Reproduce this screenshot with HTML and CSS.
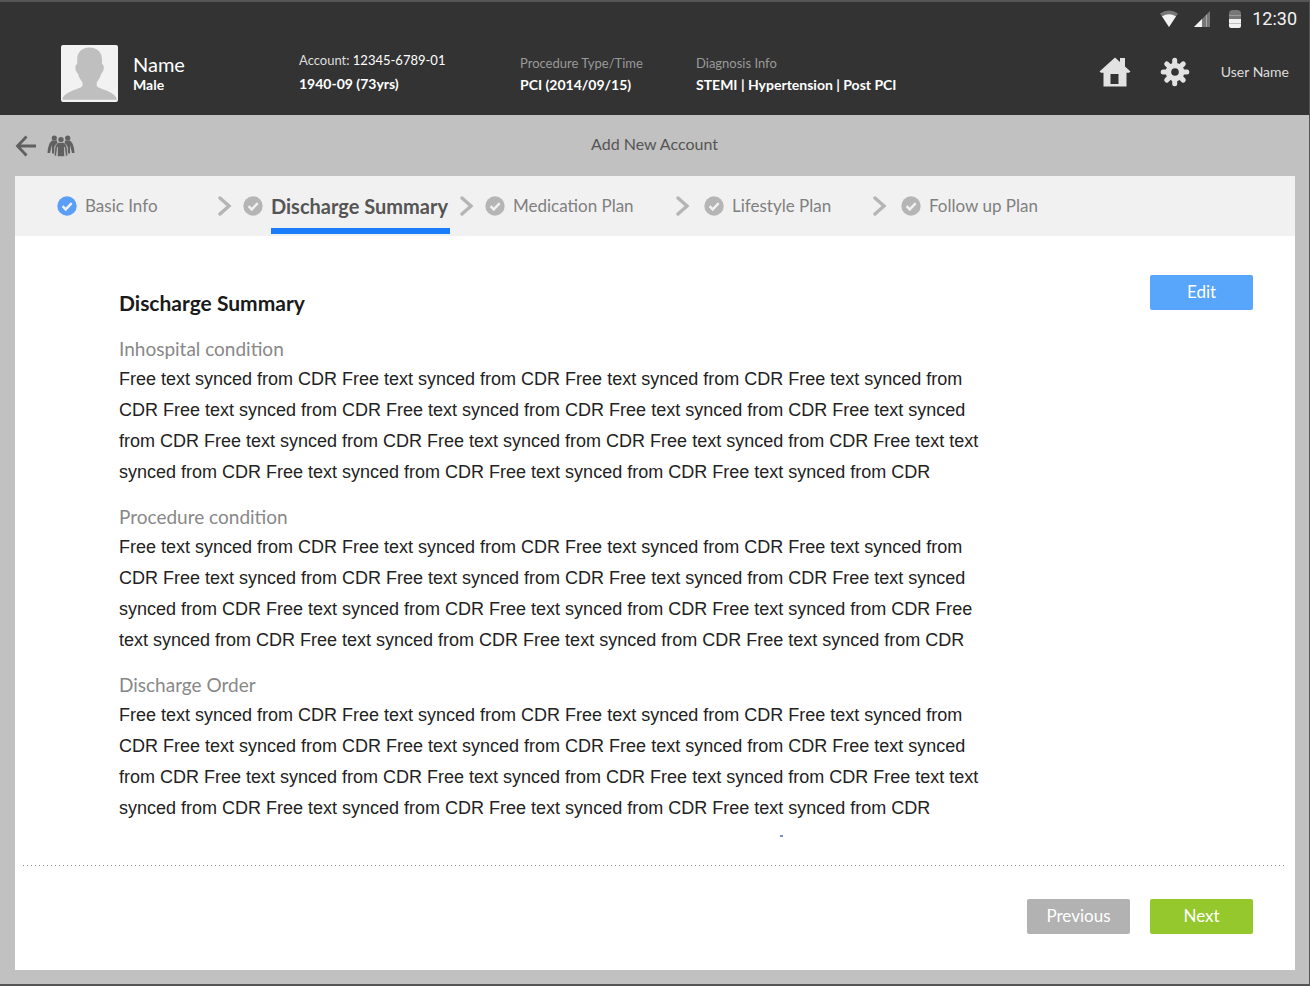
FILE: index.html
```html
<!DOCTYPE html>
<html lang="en">
<head>
<meta charset="utf-8">
<title>Discharge Summary</title>
<meta name="viewport" content="width=device-width, initial-scale=1">
<link rel="stylesheet" href="styles.css">
</head>
<body>
<svg width="0" height="0" class="defs" aria-hidden="true">
  <symbol id="check" viewBox="0 0 20 20"><circle cx="10" cy="10" r="9.7" fill="currentColor"/><path d="M5.6 10.2l3.1 3.2 6-6.3" fill="none" stroke="#f1f1f1" stroke-width="2.4"/></symbol>
  <symbol id="chevron" viewBox="0 0 14 20"><path d="M2 2l9 8-9 8" fill="none" stroke="currentColor" stroke-width="3.4" stroke-linecap="round"/></symbol>
</svg>
<div class="app">
  <header class="header">
    <div class="status">
      <svg width="20" height="18" viewBox="0 0 20 18" aria-hidden="true"><path d="M1 3.6Q10-2.4 19 3.6L10 17z" fill="#777"/><path d="M3 6.2Q10 2.2 17 6.2L10 17z" fill="#f2f2f2"/></svg>
      <svg width="18" height="18" viewBox="0 0 18 18" aria-hidden="true"><path d="M17 1v16H1z" fill="#777"/><path d="M9 9v8H1z" fill="#f2f2f2"/><path d="M13.5 5v12" stroke="#aaa"/></svg>
      <svg width="12" height="18" viewBox="0 0 12 18" aria-hidden="true"><path d="M0 4q0-4 4-4h4q4 0 4 4v5H0z" fill="#777"/><path d="M0 9h12v7q0 2-2 2H2q-2 0-2-2z" fill="#f2f2f2"/><path d="M0 5.500h12M0 13.500h12" stroke="#aaa" stroke-width=".7"/></svg>
      <time class="clock">12:30</time>
    </div>
    <div class="patient">
      <svg class="avatar" viewBox="0 0 57 57" role="img" aria-label="Patient photo"><rect width="57" height="57" rx="2" fill="#f2f2f2"/><path d="M28.500 2.600c8 0 12.600 5 12.500 12.400v4c2.500.5 2.500 7-.7 9.500-1 4-2.800 6-4.600 9v3.500c4 4 18 5 20 13v.8H1.500V54c2-8 16-9 20-13v-3.500c-1.800-3-3.600-5-4.600-9-3.200-2.500-3.200-9-.7-9.500v-4C16 7.600 20.500 2.600 28.500 2.600z" fill="#c0bfc0"/></svg>
      <div class="who"><span class="name">Name</span><strong>Male</strong></div>
      <div class="fact account"><span>Account: <b>12345-6789-01</b></span><strong>1940-09 (73yrs)</strong></div>
      <div class="fact procedure"><span>Procedure Type/Time</span><strong>PCI (2014/09/15)</strong></div>
      <div class="fact diagnosis"><span>Diagnosis Info</span><strong>STEMI | Hypertension | Post PCI</strong></div>
      <nav class="tools">
        <button type="button" class="icon" aria-label="Home"><svg width="32" height="30" viewBox="0 0 32 30"><path fill-rule="evenodd" d="M16 .5l5 4.600V1h5v8.500l5.500 5-1.500 1.300h-2.500V29.500h-23V15.800H2L.5 14.500zM11.500 17v10h8V17z" fill="#e2e2e2"/></svg></button>
        <button type="button" class="icon" aria-label="Settings"><svg width="30" height="30" viewBox="0 0 30 30"><g stroke="#e2e2e2" stroke-width="5" stroke-linecap="round"><path d="M14.700 3.200v23.600M3.200 15h23.600M6.700 6.900l16.600 16.200M23.300 6.900L6.700 23.100"/></g><circle cx="15" cy="15" r="9.300" fill="#e2e2e2"/><circle cx="15" cy="15" r="3.800" fill="#333"/></svg></button>
        <a href="#user" class="user">User Name</a>
      </nav>
    </div>
  </header>
  <div class="titlebar">
    <div class="left">
      <button type="button" class="icon" aria-label="Back"><svg width="22" height="22" viewBox="0 0 22 22"><path d="M11.500 1.500L2.500 11l9 9.500M2.500 11H21" fill="none" stroke="#606060" stroke-width="2.800"/></svg></button>
      <button type="button" class="icon" aria-label="Patients"><svg width="28" height="22" viewBox="0 0 28 22" fill="#606060"><circle cx="7.300" cy="3" r="2.600"/><circle cx="20.700" cy="3" r="2.600"/><path d="M5 5.500h5l.5 3-3 3-.5 7H5V10l-2 8H.5Q.8 9 5 5.500zM23 5.500h-5l-.5 3 3 3 .5 7h2V10l2 8h2.500Q27.200 9 23 5.500z"/><circle cx="14" cy="4.600" r="2.700"/><path d="M11.500 7.500h5c3 1 4 5 4.200 13.500h-2L17.500 12v9.500h-7V12L9.300 21h-2c.2-8.500 1.200-12.500 4.200-13.500z" stroke="#c1c1c1" stroke-width=".6"/></svg></button>
    </div>
    <h1>Add New Account</h1>
  </div>
  <main class="panel">
    <nav class="steps">
      <a href="#basic" class="step done"><svg class="check"><use href="#check"/></svg><span>Basic Info</span></a>
      <a href="#discharge" class="step active" aria-current="step"><svg class="chevron"><use href="#chevron"/></svg><svg class="check"><use href="#check"/></svg><span>Discharge Summary</span></a>
      <a href="#medication" class="step"><svg class="chevron"><use href="#chevron"/></svg><svg class="check"><use href="#check"/></svg><span>Medication Plan</span></a>
      <a href="#lifestyle" class="step wide"><svg class="chevron"><use href="#chevron"/></svg><svg class="check"><use href="#check"/></svg><span>Lifestyle Plan</span></a>
      <a href="#followup" class="step wide"><svg class="chevron"><use href="#chevron"/></svg><svg class="check"><use href="#check"/></svg><span>Follow up Plan</span></a>
    </nav>
    <div class="content">
      <article class="summary">
        <h2>Discharge Summary</h2>
        <section>
          <h3>Inhospital condition</h3>
          <p>Free text synced from CDR Free text synced from CDR Free text synced from CDR Free text synced from<br>CDR Free text synced from CDR Free text synced from CDR Free text synced from CDR Free text synced<br>from CDR Free text synced from CDR Free text synced from CDR Free text synced from CDR Free text text<br>synced from CDR Free text synced from CDR Free text synced from CDR Free text synced from CDR</p>
        </section>
        <section>
          <h3>Procedure condition</h3>
          <p>Free text synced from CDR Free text synced from CDR Free text synced from CDR Free text synced from<br>CDR Free text synced from CDR Free text synced from CDR Free text synced from CDR Free text synced<br>synced from CDR Free text synced from CDR Free text synced from CDR Free text synced from CDR Free<br>text synced from CDR Free text synced from CDR Free text synced from CDR Free text synced from CDR</p>
        </section>
        <section>
          <h3>Discharge Order</h3>
          <p>Free text synced from CDR Free text synced from CDR Free text synced from CDR Free text synced from<br>CDR Free text synced from CDR Free text synced from CDR Free text synced from CDR Free text synced<br>from CDR Free text synced from CDR Free text synced from CDR Free text synced from CDR Free text text<br>synced from CDR Free text synced from CDR Free text synced from CDR Free text synced from CDR</p>
        </section>
      </article>
      <button type="button" class="btn edit">Edit</button>
    </div>
    <div class="speck"></div>
    <footer class="actions">
      <button type="button" class="btn previous">Previous</button>
      <button type="button" class="btn next">Next</button>
    </footer>
  </main>
</div>
</body>
</html>
```
FILE: styles.css
```css
* { box-sizing: border-box; }
body { margin: 0; font-family: Lato, "Open Sans", sans-serif; }
h1, h2, h3, p { margin: 0; }
button { font: inherit; border: 0; padding: 0; cursor: pointer; }
a { color: inherit; text-decoration: none; }
svg { display: block; flex: none; }
.defs { position: absolute; }

.app { min-height: 100vh; display: flex; flex-direction: column; background: #c1c1c1; border: solid #555; border-width: 2px 1px 2px 0; }
.icon { background: none; }

.header { background: #333; color: #fff; height: 113px; }
.status { display: flex; justify-content: flex-end; align-items: center; height: 33px; padding-right: 12px; }
.status svg { margin-right: 14px; }
.status svg:nth-child(2) { margin-right: 18px; }
.status svg:nth-child(3) { margin-right: 11px; }
.clock { font: 400 18px/20px Roboto, sans-serif; color: #f2f2f2; }

.patient { display: flex; padding: 10px 20px 0 61px; }
.avatar { width: 57px; height: 57px; margin-right: 15px; }
.who, .fact { display: flex; flex-direction: column; font-size: 13px; line-height: 22px; white-space: nowrap; }
.who { width: 166px; padding-top: 7px; line-height: 18px; }
.name { font-size: 20px; line-height: 24px; }
.fact { padding-top: 7px; color: #999; }
.who strong, .fact strong { font-size: 14px; color: #fff; }
.account { width: 221px; padding-top: 4px; color: #ddd; line-height: 23px; }
.account b { color: #fff; font-weight: 400; }
.procedure { width: 176px; }
.tools { display: flex; align-items: center; margin-left: auto; height: 53px; }
.tools .icon { margin-right: 29px; }
.tools .icon + .icon { margin-right: 31px; }
.user { font-size: 14px; color: #ddd; }

.titlebar { display: grid; grid-template-columns: 1fr auto 1fr; align-items: center; height: 61px; padding: 0 15px; }
.left { display: flex; gap: 10px; }
.titlebar h1 { font-size: 16px; line-height: 24px; font-weight: 400; color: #555; padding-bottom: 4px; }

.panel { flex: 1; display: flex; flex-direction: column; margin: 0 14px 14px 15px; background: #fff; }
.steps { display: flex; height: 60px; padding-left: 42px; background: #f1f1f1; color: #808080; font-size: 17px; }
.step { display: flex; align-items: center; }
.step:nth-child(1) { width: 161px; }
.step:nth-child(2) { width: 242px; }
.step:nth-child(3) { width: 216px; }
.step:nth-child(4) { width: 197px; }
.step span { white-space: nowrap; line-height: 24px; }
.check { width: 20px; height: 20px; margin-right: 8px; color: #b5b5b5; }
.done .check { color: #5a9ef8; }
.chevron { width: 14px; height: 20px; margin-right: 11px; color: #b5b5b5; }
.wide .chevron { margin-right: 14px; }
.active span { align-self: flex-end; margin-bottom: 2px; padding: 16px 2px 10px 0; border-bottom: 6px solid #1a7dfa; color: #555; font-size: 20px; font-weight: 700; }

.content { display: flex; justify-content: space-between; align-items: flex-start; padding: 39px 42px 0 104px; }
.summary { color: #222; font-size: 18px; line-height: 31px; white-space: nowrap; }
.summary h2 { font-size: 21px; line-height: 31px; padding: 12px 0 15px; color: #1a1a1a; }
.summary h3 { font-size: 19px; line-height: 31px; font-weight: 400; color: #888; }
.summary p { font-family: "Liberation Sans", Arial, sans-serif; }
.summary section + section { margin-top: 13px; }
.btn { width: 103px; height: 35px; border-radius: 2px; color: #fff; font-size: 17px; padding-bottom: 2px; }
.edit { background: #58a5fc; }
.speck { width: 3px; height: 2px; margin: 11px 0 28px 765px; background: #7593bb; }
.actions { display: flex; justify-content: flex-end; gap: 20px; margin: 0 10px 0 8px; padding: 34px 32px 36px 0; background: repeating-linear-gradient(90deg, #888 0 1px, transparent 1px 4px) top / 100% 1px no-repeat; }
.previous { background: #b2b2b2; }
.next { background: #94c82c; }
```
